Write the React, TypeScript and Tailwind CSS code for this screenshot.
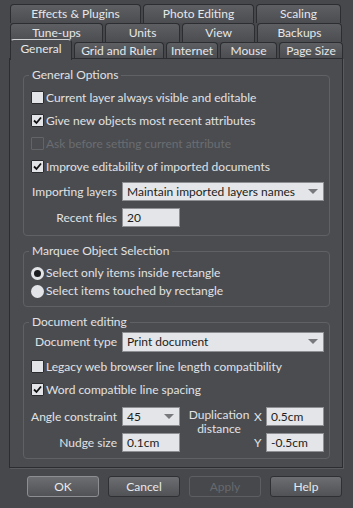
import { ReactNode } from 'react'

const tabBase =
  'h-[19px] shrink-0 rounded-t-[4px] border border-b-0 border-[#2b2d30] bg-gradient-to-b from-[#5d5f63] to-[#4b4d51] text-center text-[12px] leading-[18px] text-[#e6e7e9]'

function Tab({ label, w }: { label: string; w: number }) {
  return (
    <div className={tabBase} style={{ width: w }}>
      {label}
    </div>
  )
}

function Check({ checked, disabled }: { checked?: boolean; disabled?: boolean }) {
  if (disabled) {
    return <div className="w-[13px] h-[13px] border border-[#626468] rounded-[1px]" />
  }
  return (
    <div className="w-[13px] h-[13px] bg-[#e3e4e7] border border-[#2a2c2f] rounded-[1px] flex items-center justify-center">
      {checked && (
        <svg width="9" height="9" viewBox="0 0 9 9">
          <path d="M1 4.5 L3.5 7 L8 1.5" stroke="#111" strokeWidth="1.8" fill="none" />
        </svg>
      )}
    </div>
  )
}

function CheckRow({
  label,
  checked,
  disabled
}: {
  label: string
  checked?: boolean
  disabled?: boolean
}) {
  return (
    <div className="h-[23px] flex items-center pl-[7px] gap-[2px]">
      <Check checked={checked} disabled={disabled} />
      <span className={disabled ? 'text-[#6b6d71]' : ''}>{label}</span>
    </div>
  )
}

function Radio({ label, selected }: { label: string; selected?: boolean }) {
  return (
    <div className="h-[18px] flex items-center pl-[7px] gap-[2px]">
      <div className="w-[13px] h-[13px] rounded-full bg-[#e3e4e7] flex items-center justify-center">
        {selected && <div className="w-[7px] h-[7px] rounded-full bg-[#1c1d1f]" />}
      </div>
      <span>{label}</span>
    </div>
  )
}

function Group({ title, children, className = '' }: { title: string; children: ReactNode; className?: string }) {
  return (
    <fieldset className={'w-[307px] border border-[#5f6165] rounded-[4px] ' + className}>
      <legend className="ml-[5px] px-[3px] leading-[16px]">{title}</legend>
      {children}
    </fieldset>
  )
}

function Field({ value, w, h = 19, dropdown }: { value: string; w: number; h?: number; dropdown?: boolean }) {
  return (
    <div
      className="shrink-0 bg-[#e3e5e8] border border-[#8d8f93] text-[#1d1e20] pl-[4px] flex items-center justify-between"
      style={{ width: w, height: h }}
    >
      <span>{value}</span>
      {dropdown && (
        <svg width="10" height="6" viewBox="0 0 10 6" className="mr-[5px]">
          <path d="M0 0 H10 L5 5 Z" fill="#77797d" />
        </svg>
      )}
    </div>
  )
}

function Label({ children }: { children: ReactNode }) {
  return <div className="w-[93px] shrink-0 text-right">{children}</div>
}

function Button({ label, primary, disabled }: { label: string; primary?: boolean; disabled?: boolean }) {
  if (disabled) {
    return (
      <div className="w-[72px] h-[21px] rounded-[3px] border border-[#5c5e62] flex items-center justify-center text-[#67696d]">
        {label}
      </div>
    )
  }
  return (
    <div
      className={
        'w-[72px] h-[21px] rounded-[3px] border bg-gradient-to-b from-[#6c6e72] to-[#505256] flex items-center justify-center text-[#e8e9eb] ' +
        (primary ? 'border-[#8c8e92]' : 'border-[#2e3033]')
      }
    >
      {label}
    </div>
  )
}

export default function App() {
  return (
    <div className="w-[353px] h-[508px] bg-[#46484c] font-['Lato',sans-serif] text-[12px] text-[#e1e2e4] overflow-hidden">
      {/* tabs */}
      <div className="pt-[4px] pl-[10px]">
        <div className="flex gap-[2px]">
          <Tab label="Effects & Plugins" w={131} />
          <Tab label="Photo Editing" w={111} />
          <Tab label="Scaling" w={85} />
        </div>
        <div className="flex gap-[2px]">
          <Tab label="Tune-ups" w={93} />
          <Tab label="Units" w={75} />
          <Tab label="View" w={73} />
          <Tab label="Backups" w={85} />
        </div>
        <div className="flex gap-[2px] items-end h-[16px] relative z-10">
          <div className="w-[62px] h-[21px] -mb-[2px] rounded-t-[4px] border border-b-0 border-[#2b2d30] border-t-[#cfd0d2] bg-[#4a4c50] text-center leading-[17px] text-[#e6e7e9]">
            General
          </div>
          <div className={tabBase + ' !h-[16px] !leading-[16px]'} style={{ width: 90 }}>Grid and Ruler</div>
          <div className={tabBase + ' !h-[16px] !leading-[16px]'} style={{ width: 52 }}>Internet</div>
          <div className={tabBase + ' !h-[16px] !leading-[16px]'} style={{ width: 57 }}>Mouse</div>
          <div className={tabBase + ' !h-[16px] !leading-[16px]'} style={{ width: 64 }}>Page Size</div>
        </div>
      </div>

      {/* panel */}
      <div className="ml-[9px] w-[334px] h-[410px] border border-[#2b2d30] bg-[#4a4c50] shadow-[1px_1px_0_#595b5f] px-[13px] pt-[8px]">
        <Group title="General Options" className="pb-[8px]">
          <div className="pt-[3px]">
            <CheckRow label="Current layer always visible and editable" />
            <CheckRow label="Give new objects most recent attributes" checked />
            <CheckRow label="Ask before setting current attribute" disabled />
            <CheckRow label="Improve editability of imported documents" checked />
          </div>
          <div className="mt-[4px] flex items-center gap-[5px]">
            <Label>Importing layers</Label>
            <Field value="Maintain imported layers names" w={202} dropdown />
          </div>
          <div className="mt-[7px] flex items-center gap-[5px]">
            <Label>Recent files</Label>
            <Field value="20" w={58} />
          </div>
        </Group>

        <Group title="Marquee Object Selection" className="mt-[7px] pb-[6px]">
          <div className="pt-[5px]">
            <Radio label="Select only items inside rectangle" selected />
            <Radio label="Select items touched by rectangle" />
          </div>
        </Group>

        <Group title="Document editing" className="mt-[7px] pb-[6px]">
          <div className="mt-[2px] flex items-center gap-[5px]">
            <Label>Document type</Label>
            <Field value="Print document" w={202} h={20} dropdown />
          </div>
          <div className="mt-[3px]">
            <CheckRow label="Legacy web browser line length compatibility" />
            <CheckRow label="Word compatible line spacing" checked />
          </div>
          <div className="mt-[6px] flex">
            <div className="flex flex-col gap-[7px]">
              <div className="flex items-center gap-[5px]">
                <Label>Angle constraint</Label>
                <Field value="45" w={58} dropdown />
              </div>
              <div className="flex items-center gap-[5px]">
                <Label>Nudge size</Label>
                <Field value="0.1cm" w={58} />
              </div>
            </div>
            <div className="w-[64px] ml-[7px] pt-[1px] text-center leading-[14px]">
              <div>Duplication</div>
              <div>distance</div>
            </div>
            <div className="flex flex-col gap-[7px]">
              <div className="flex items-center gap-[5px] pl-[3px]">
                <span className="w-[7px] text-center">X</span>
                <Field value="0.5cm" w={58} />
              </div>
              <div className="flex items-center gap-[5px] pl-[3px]">
                <span className="w-[7px] text-center">Y</span>
                <Field value="-0.5cm" w={58} />
              </div>
            </div>
          </div>
        </Group>
      </div>

      {/* buttons */}
      <div className="mt-[8px] ml-[27px] flex gap-[9px]">
        <Button label="OK" primary />
        <Button label="Cancel" />
        <Button label="Apply" disabled />
        <Button label="Help" />
      </div>
    </div>
  )
}
